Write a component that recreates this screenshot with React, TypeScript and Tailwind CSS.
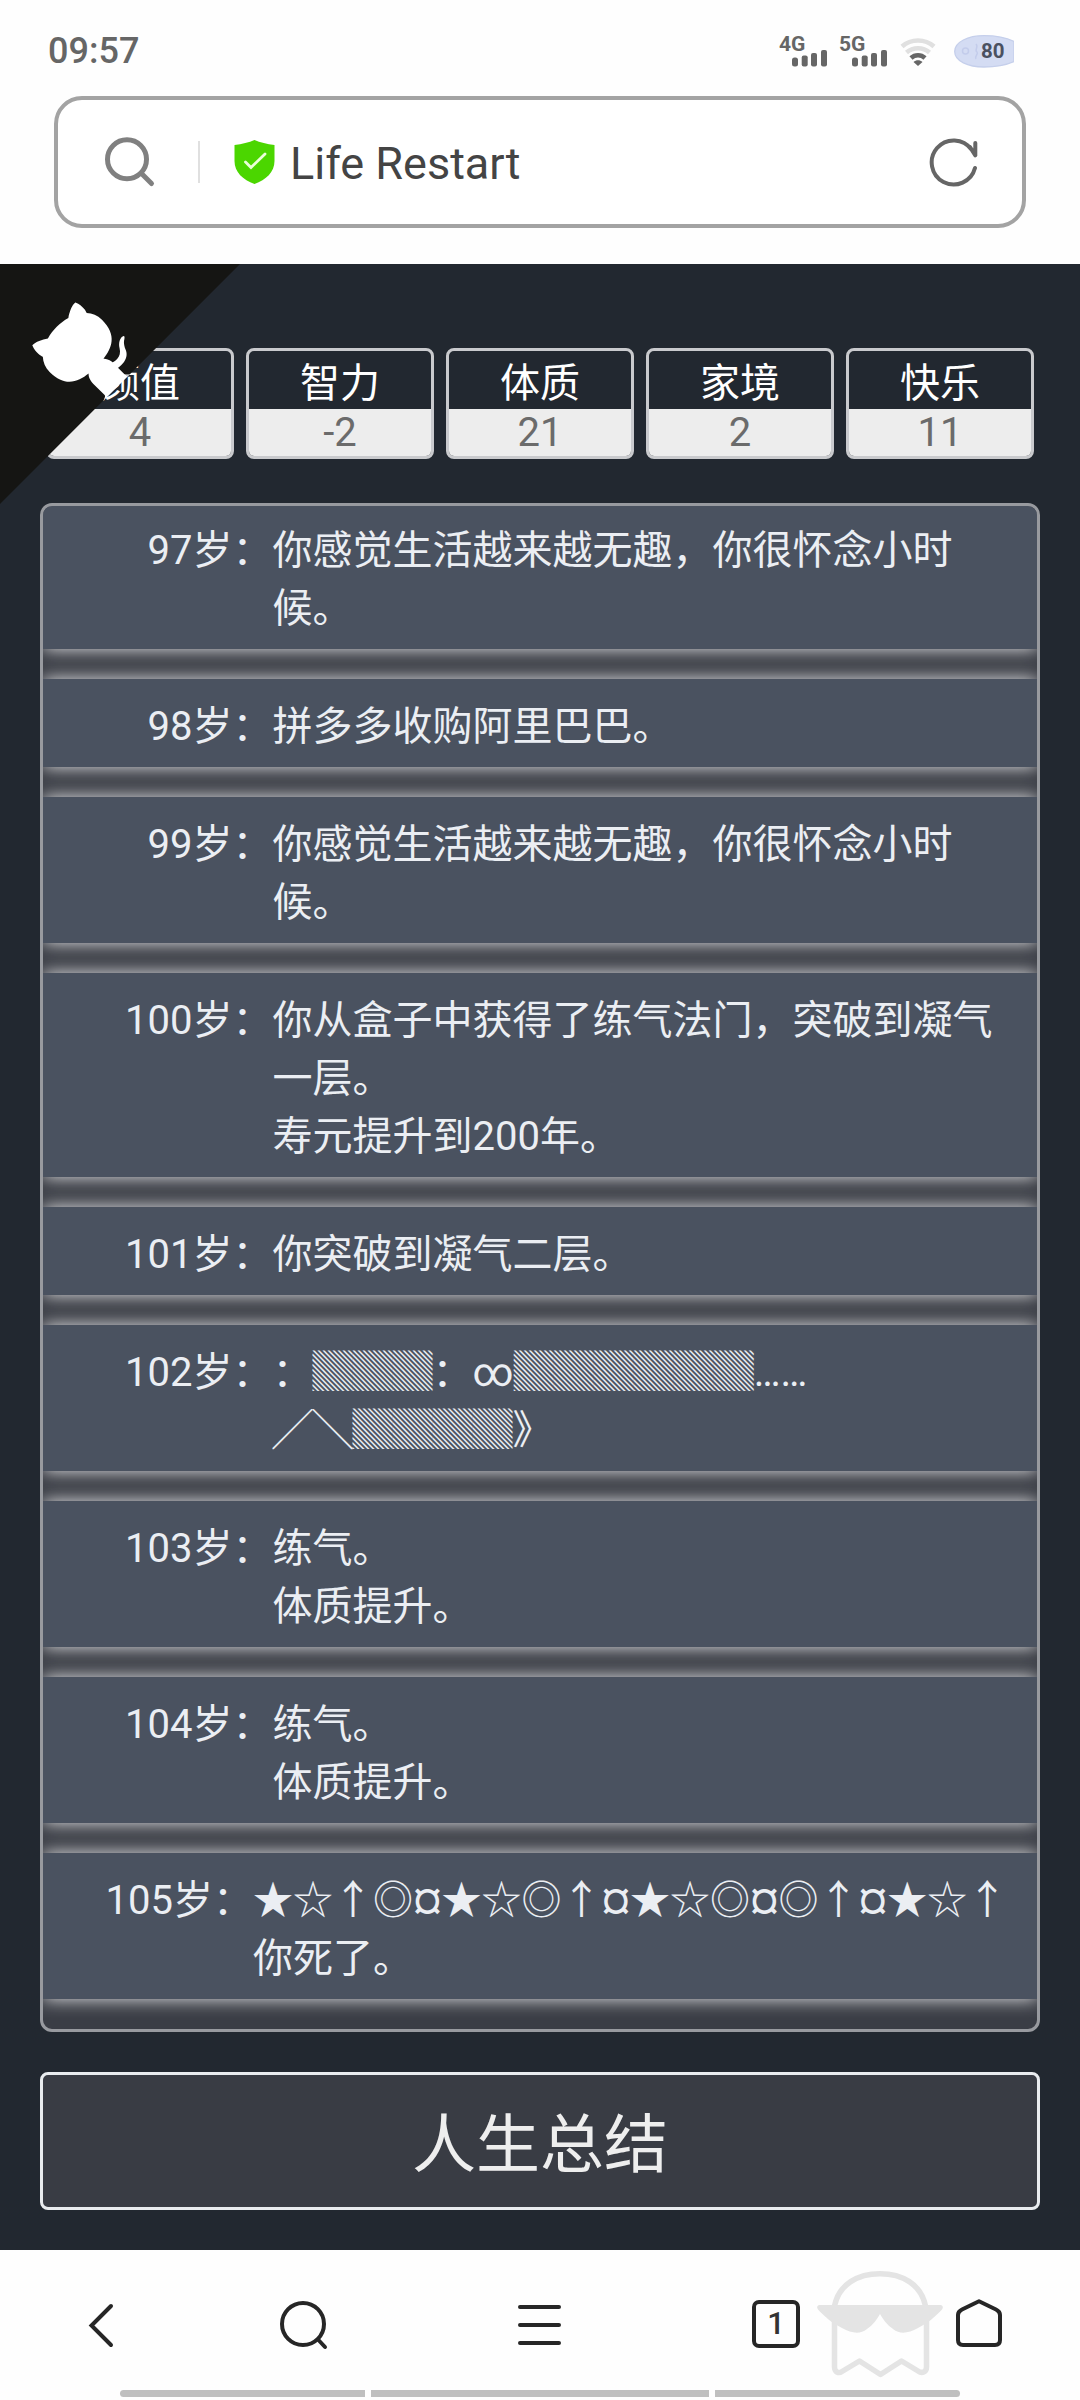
import React from "react";

const STATS = [
  { name: "颜值", value: "4" },
  { name: "智力", value: "-2" },
  { name: "体质", value: "21" },
  { name: "家境", value: "2" },
  { name: "快乐", value: "11" },
];

type Entry = { age: string; lines: string[]; narrow?: boolean };

const ENTRIES: Entry[] = [
  { age: "97岁：", lines: ["你感觉生活越来越无趣，你很怀念小时", "候。"] },
  { age: "98岁：", lines: ["拼多多收购阿里巴巴。"] },
  { age: "99岁：", lines: ["你感觉生活越来越无趣，你很怀念小时", "候。"] },
  { age: "100岁：", lines: ["你从盒子中获得了练气法门，突破到凝气", "一层。", "寿元提升到200年。"] },
  { age: "101岁：", lines: ["你突破到凝气二层。"] },
  { age: "102岁：", lines: ["：▓▓▓：∞▓▓▓▓▓▓……", "╱╲▓▓▓▓》"] },
  { age: "103岁：", lines: ["练气。", "体质提升。"] },
  { age: "104岁：", lines: ["练气。", "体质提升。"] },
  { age: "105岁：", lines: ["★☆↑◎¤★☆◎↑¤★☆◎¤◎↑¤★☆↑", "你死了。"], narrow: true },
];

function Signal({ label }: { label: string }) {
  return (
    <div className="relative h-[32px] w-[50px]">
      <span className="absolute top-0 -left-px text-[21px] leading-[18px] font-bold">{label}</span>
      <svg className="absolute top-[15px] left-[12px]" width="37" height="18" viewBox="0 0 37 18" fill="#666">
        <rect x="0" y="7.5" width="6" height="9" rx="2.5" />
        <rect x="9.7" y="5.5" width="6" height="11" rx="2" />
        <rect x="19" y="3" width="6" height="13.5" rx="2" />
        <rect x="29" y="0" width="6" height="16.5" rx="2" />
      </svg>
    </div>
  );
}

function StatusBar() {
  return (
    <div className="flex h-[96px] items-start pl-[48px] pr-[66px] pt-[35px] text-[#666]">
      <span className="mr-auto text-[36px] leading-[32px] font-medium">09:57</span>
      <Signal label="4G" />
      <div className="w-[10px]" />
      <Signal label="5G" />
      <svg className="ml-[10px]" width="36" height="32" viewBox="0 0 36 32" fill="none" strokeWidth="4.6">
        <path d="M2 11.5C11 3.5 25 3.5 34 11.5" stroke="#e0e0e0" />
        <path d="M6.5 17.5C13 11.8 23 11.8 29.500 17.500" stroke="#e0e0e0" />
        <path d="M11 23C15 19.300 21 19.300 25 23" stroke="#666" />
        <path d="M13.500 27C16 24.600 20 24.600 22.500 27L18 31Z" fill="#666" />
      </svg>
      <svg className="ml-[18px]" width="60" height="33" viewBox="0 0 60 33">
        <path d="M60 6.500C50 1.500 40 .7 30 .7C14 .7 .7 7 .7 16.500S14 32 30 32C40 32 50 31 60 26.500Z" fill="#d4dcf3" stroke="#c5cfeb" strokeWidth="1.300" />
        <circle cx="11.500" cy="16" r="3" fill="none" stroke="#c3cceb" strokeWidth="1.500" />
        <path d="M22 9C25 12 20 15 23 17C25 19 20 21 22 24" fill="none" stroke="#c3cceb" strokeWidth="1.500" />
        <text x="27" y="23.200" fontSize="20.500" fontWeight="700" fill="#4b5161" fontFamily="Roboto">80</text>
      </svg>
    </div>
  );
}

function AddressBar() {
  return (
    <div className="mx-[54px] flex h-[132px] items-center rounded-[28px] border-4 border-[#a3a3a3] bg-white">
      <svg className="ml-[46px]" width="52" height="52" viewBox="104 136 52 52" fill="none" stroke="#808080" strokeWidth="5" strokeLinecap="round">
        <circle cx="127" cy="159.300" r="19.500" />
        <path d="M141.500 173.500L151.500 183.500" />
      </svg>
      <div className="ml-[42px] h-[42px] w-[2px] bg-[#e0e0e0]" />
      <svg className="ml-[34px]" width="41" height="45" viewBox="234 141 41 45">
        <path d="M254.500 141C260 143.500 267 145 274.500 146V162C274.500 173 266 181 254.500 185C243 181 234.500 173 234.500 162V146C242 145 249 143.500 254.500 141Z" fill="#4bd600" />
        <path d="M245.500 163L251 168.500L265 155" fill="none" stroke="#eaffd8" strokeWidth="2.800" strokeLinecap="round" />
      </svg>
      <span className="ml-[15px] mt-[3px] text-[45px] leading-[60px] whitespace-nowrap text-[#444]">Life Restart</span>
      <svg className="mr-[43px] ml-auto" width="50" height="50" viewBox="929 137 50 50" fill="none" stroke="#666" strokeWidth="4" strokeLinecap="round" strokeLinejoin="round">
        <path d="M975 168A22 22 0 1 1 971.500 149.500L975.300 155.300V143M975.300 155L970 147" />
      </svg>
    </div>
  );
}

function GithubCorner() {
  return (
    <svg className="absolute top-0 left-0 z-10 -scale-x-100" width="240" height="240" viewBox="0 0 250 250" fill="#fff">
      <path d="M0,0 L115,115 L130,115 L142,142 L250,250 L250,0 Z" fill="#151513" />
      <path d="M128.3,109.0 C113.8,99.7 119.0,89.6 119.0,89.6 C122.0,82.7 120.5,78.6 120.5,78.6 C119.2,72.0 123.4,76.3 123.4,76.3 C127.3,80.9 125.5,87.3 125.5,87.3 C122.9,97.6 130.6,101.9 134.4,103.2" />
      <path d="M115.0,115.0 C114.9,115.1 118.7,116.5 119.8,115.4 L133.7,101.6 C136.9,99.2 139.9,98.4 142.2,98.6 C133.8,88.0 127.5,74.4 143.8,58.0 C148.5,53.4 154.0,51.2 159.7,51.0 C160.3,49.4 163.2,43.6 171.4,40.1 C171.4,40.1 176.1,42.5 178.8,56.2 C183.1,58.6 187.2,61.8 190.9,65.4 C194.5,69.0 197.7,73.2 200.1,77.6 C213.8,80.2 216.3,84.9 216.3,84.9 C212.7,93.1 206.9,96.0 205.4,96.6 C205.1,102.4 203.0,107.8 198.3,112.5 C181.9,128.9 168.3,122.5 157.7,114.1 C157.9,116.9 156.7,120.9 152.7,124.9 L141.0,136.5 C139.8,137.7 141.6,141.9 141.8,141.8 Z" />
    </svg>
  );
}

function Stats() {
  return (
    <div className="flex gap-3 px-[46px] pt-[84px]">
      {STATS.map((s) => (
        <div key={s.name} className="h-[111px] w-[188px] overflow-hidden rounded-[8px] border-[3px] border-[#c9cacd] text-center text-[40px]">
          <div className="h-[58px] pt-[4px] leading-[58px] text-white">{s.name}</div>
          <div className="relative h-[47px] bg-[#ededed] leading-[47px] text-[#6b6b6b]">{s.value}</div>
        </div>
      ))}
    </div>
  );
}

function Timeline() {
  return (
    <ul className="mx-[40px] mt-[44px] h-[1529px] overflow-hidden rounded-[12px] border-[3px] border-[#989a9f] bg-[#3a3d45] text-[40px] leading-[58px] text-[#ebeef3]">
      {ENTRIES.map((e, i) => (
        <li
          key={e.age}
          className={`mb-[30px] flex bg-[#4a5260] pb-[11px] shadow-[0_0_17px_#e8e8ea] ${i === 0 ? "pt-[16px]" : "pt-[19px]"}`}
        >
          <span className={`shrink-0 text-right whitespace-nowrap ${e.narrow ? "w-[210px]" : "w-[229.5px]"}`}>{e.age}</span>
          <div className="whitespace-nowrap">
            {e.lines.map((l) => (
              <div key={l} className="h-[58px]">{l}</div>
            ))}
          </div>
        </li>
      ))}
    </ul>
  );
}

function BottomNav() {
  return (
    <div className="flex h-[150px] flex-col bg-[#fefefe]">
      <div className="flex h-[140px] items-start pt-[20px]">
        <svg className="ml-[87px]" width="30" height="110" viewBox="87 2270 30 110" fill="none" stroke="#262626" strokeWidth="4" strokeLinecap="round">
          <path d="M111 2306L91.500 2325.500L111 2345" />
        </svg>
        <svg className="ml-[161px]" width="52" height="110" viewBox="278 2270 52 110" fill="none" stroke="#262626" strokeWidth="4" strokeLinecap="round">
          <circle cx="303" cy="2324" r="21" />
          <path d="M318 2339.500L325 2347" />
        </svg>
        <svg className="ml-[186px]" width="48" height="110" viewBox="516 2270 48 110" stroke="#262626" strokeWidth="4" strokeLinecap="round">
          <path d="M520 2307H559M520 2325H559M520 2343H559" />
        </svg>
        <div className="mt-[30px] ml-[188px] flex h-[48px] w-[48px] items-center justify-center rounded-[7px] border-4 border-[#262626] text-[31px] leading-[40px] font-medium text-[#333]">1</div>
        <svg className="ml-[15px]" width="130" height="110" viewBox="815 2270 130 110" fill="none" stroke="#e4e4e4" strokeWidth="5.500" strokeLinejoin="round">
          <path d="M834.500 2306C839 2284 858 2273.700 880 2273.700S921 2284 925.500 2306" />
          <path d="M819 2305H941C943 2305.500 943.500 2307.500 942 2309.500C935 2317 928 2323 918 2328C908 2333.500 900 2334.500 893 2329C887 2325 883 2319 880 2314C877 2319 873 2325 867 2329C860 2334.500 852 2333.500 842 2328C832 2323 825 2317 818 2309.500C816.500 2307.500 817 2305.500 819 2305Z" fill="#e4e4e4" stroke="none" />
          <path d="M834.500 2320V2367C834.500 2372 838.500 2373.800 842 2371.500L859.500 2361L880.500 2374.500L901.500 2361L918 2371C922 2373.800 926.500 2372 926.500 2367V2320" />
        </svg>
        <svg className="ml-[9px]" width="50" height="110" viewBox="954 2270 50 110" fill="none" stroke="#262626" strokeWidth="4" strokeLinejoin="round">
          <path d="M979 2301.300L996 2309.500Q1000 2311.500 1000 2315V2340Q1000 2345 995 2345H963Q958 2345 958 2340V2315Q958 2311.500 962 2309.500Z" />
        </svg>
      </div>
      <div className="flex gap-[6px] pl-[120px]">
        <div className="h-[7px] w-[245px] rounded-l-full bg-[#bfbfbf]" />
        <div className="h-[7px] w-[338px] bg-[#bfbfbf]" />
        <div className="h-[7px] w-[245px] rounded-r-full bg-[#bfbfbf]" />
      </div>
    </div>
  );
}

export default function App() {
  return (
    <div className="flex h-[2400px] w-[1080px] flex-col overflow-hidden bg-[#fefefe] font-['Roboto','Noto_Sans_CJK_SC',sans-serif]">
      <StatusBar />
      <AddressBar />
      <main className="relative mt-[36px] h-[1986px] bg-[#222830]">
        <GithubCorner />
        <Stats />
        <Timeline />
        <button className="mx-[40px] mt-[40px] flex h-[138px] w-[1000px] items-center justify-center rounded-[8px] border-[3px] border-[#e9ecef] bg-[#393c44] pt-[10px] text-[64px] text-[#eeeeee]">
          人生总结
        </button>
      </main>
      <BottomNav />
    </div>
  );
}
